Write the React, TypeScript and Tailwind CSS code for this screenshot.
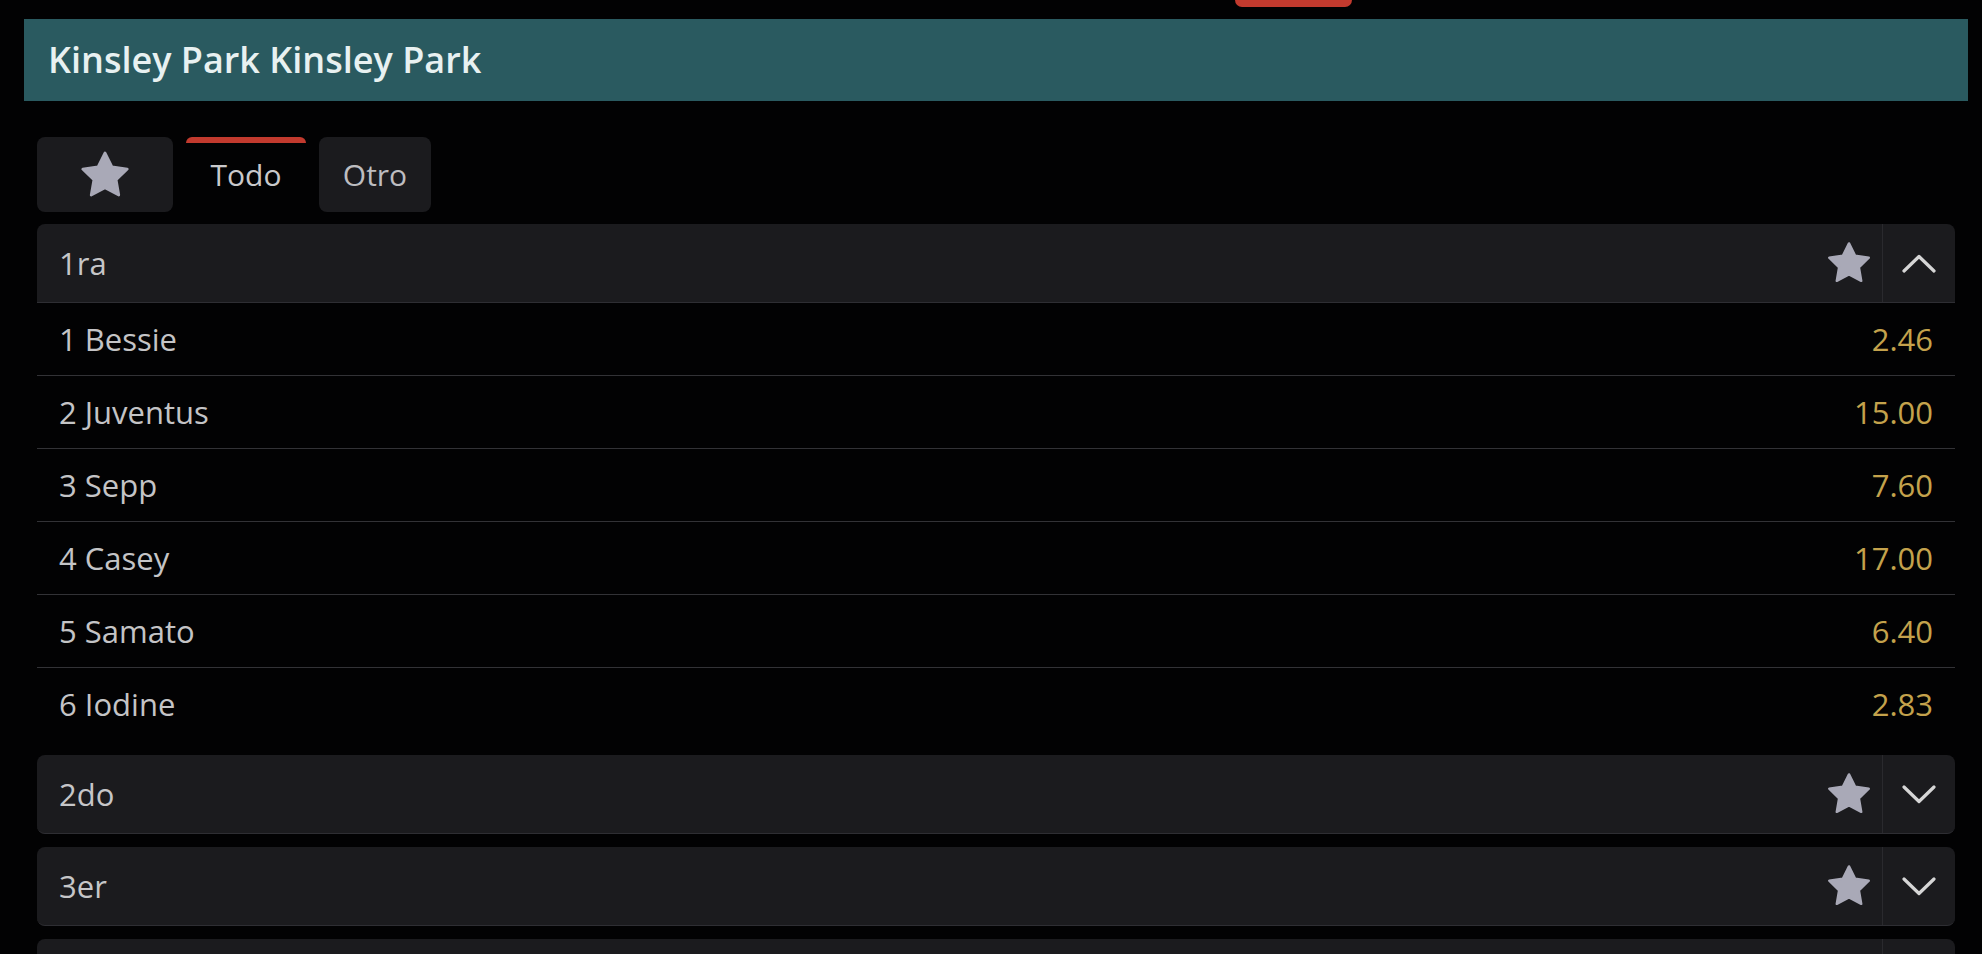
import React from "react";

const font = { fontFamily: '"Open Sans", "Noto Sans", sans-serif' };

function Star({ size }: { size: number }) {
  return (
    <svg width={size} height={size} viewBox="0 0 24 24" className="block">
      <polygon
        points="12,2.2 15.09,8.36 21.9,9.37 16.95,14.14 18.13,20.92 12,17.72 5.87,20.92 7.05,14.14 2.1,9.37 8.91,8.36"
        fill="#a9a9b7"
        stroke="#a9a9b7"
        strokeWidth="1.2"
        strokeLinejoin="round"
      />
    </svg>
  );
}

function Chevron({ up }: { up?: boolean }) {
  return (
    <svg width="34" height="21" viewBox="0 0 34 21" className="block">
      <polyline
        points={up ? "2,18 17,3.5 32,18" : "2,3 17,17.5 32,3"}
        fill="none"
        stroke="#d6d6d6"
        strokeWidth="3.2"
        strokeLinecap="round"
        strokeLinejoin="round"
      />
    </svg>
  );
}

function GroupHeader({ label, open }: { label: string; open?: boolean }) {
  return (
    <div
      className={`flex h-[79px] items-stretch bg-[#1b1b1e] border-b border-[#2e2e33] ${
        open ? "rounded-t-lg" : "rounded-lg"
      }`}
    >
      <div className="flex flex-1 items-center pl-[22px] text-[31px] text-[#c6c6c8]">{label}</div>
      <div className="flex w-[66px] items-center justify-center">
        <Star size={48} />
      </div>
      <div className="flex w-[73px] items-center justify-center border-l border-[#2a2a2e]">
        <Chevron up={open} />
      </div>
    </div>
  );
}

const runners = [
  ["1 Bessie", "2.46"],
  ["2 Juventus", "15.00"],
  ["3 Sepp", "7.60"],
  ["4 Casey", "17.00"],
  ["5 Samato", "6.40"],
  ["6 Iodine", "2.83"],
];

export default function App() {
  return (
    <div className="w-[1982px] h-[954px] overflow-hidden bg-[#020203]" style={font}>
      <div className="h-[19px] pl-[1235px]">
        <div className="h-[7px] w-[117px] rounded-b-lg bg-[#c23a2e]" />
      </div>
      <div className="ml-[24px] w-[1944px]">
        <div className="flex h-[82px] items-center bg-[#2a5a60] pl-[24px] text-[36px] font-semibold text-[#e8f1f1]">
          Kinsley Park Kinsley Park
        </div>

        <div className="mt-[36px] flex h-[75px] gap-[13px] px-[13px]">
          <div className="flex w-[136px] items-center justify-center rounded-lg bg-[#1b1b1e]">
            <Star size={54} />
          </div>
          <div className="relative flex w-[120px] items-center justify-center text-[30px] text-[#c9c9cb]">
            <div className="absolute left-0 right-0 top-0 h-[6px] rounded-t-lg bg-[#c23a2e]" />
            Todo
          </div>
          <div className="flex w-[112px] items-center justify-center rounded-lg bg-[#1b1b1e] text-[30px] text-[#bdbdc0]">
            Otro
          </div>
        </div>

        <div className="mt-[12px] flex flex-col gap-[13px] px-[13px]">
          <div className="mb-[1px]">
            <GroupHeader label="1ra" open />
            {runners.map(([name, odd], i) => (
              <div
                key={name}
                className={`flex h-[73px] items-center justify-between px-[22px] text-[31px] ${
                  i < runners.length - 1 ? "border-b border-[#323236]" : ""
                }`}
              >
                <span className="text-[#c4c4c6]">{name}</span>
                <span className="text-[#c4a24c]">{odd}</span>
              </div>
            ))}
          </div>
          <GroupHeader label="2do" />
          <GroupHeader label="3er" />
          <GroupHeader label="4to" />
        </div>
      </div>
    </div>
  );
}
